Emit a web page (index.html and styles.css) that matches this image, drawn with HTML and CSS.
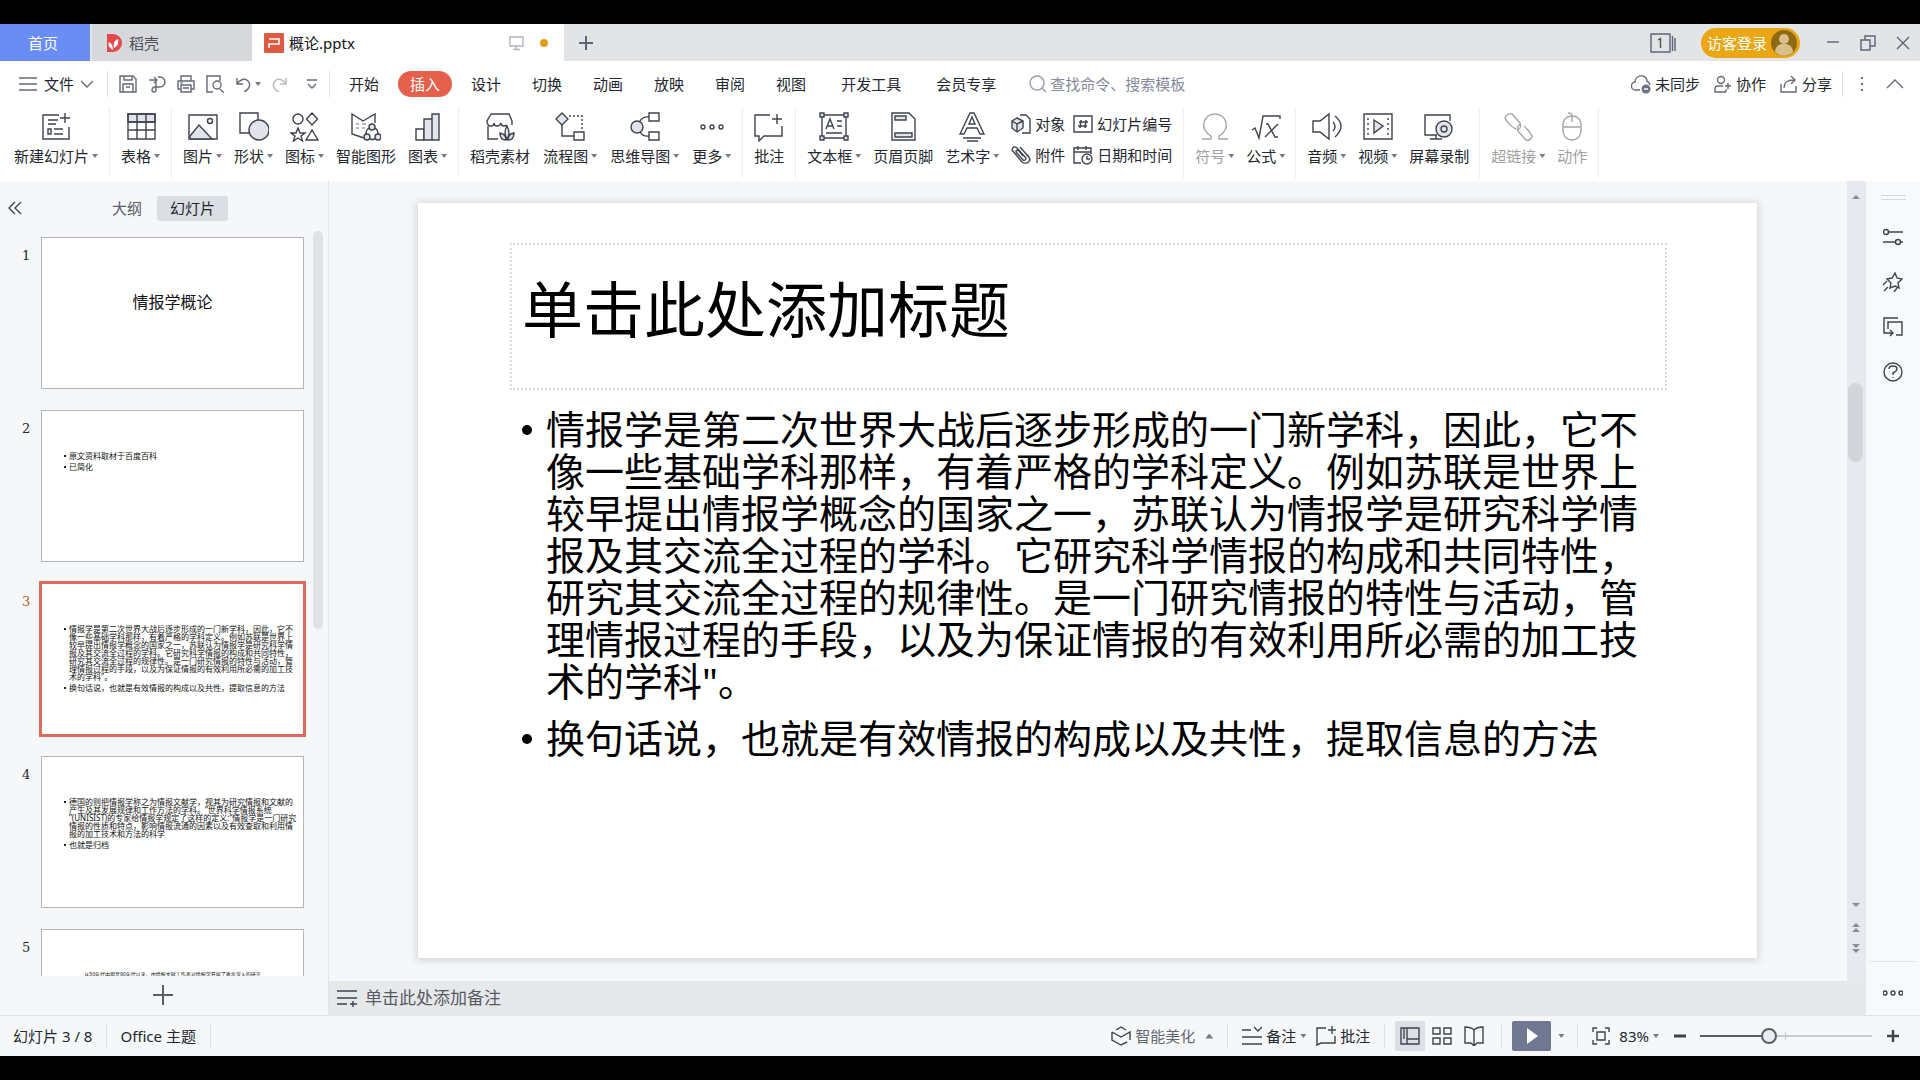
FILE: index.html
```html
<!DOCTYPE html>
<html lang="zh-CN">
<head>
<meta charset="utf-8">
<meta name="viewport" content="width=device-width, initial-scale=1">
<title>概论.pptx</title>
<link rel="stylesheet" href="styles.css">
</head>
<body>
<div class="app">
  <header class="titlebar">
    <button class="home-tab">首页</button>
    <button class="doc-tab">
      <svg class="i20 plain" viewBox="0 0 20 20"><path d="M3 1h6a9 9 0 0 1 0 18H3z" fill="#e5484b"/><path d="M9 17C4 14 4 11 5 9c3 2 4 4 4 8zM10 15c-1-5 1-8 4-9 1 4 0 7-4 9z" fill="#fff"/></svg>
      稻壳
    </button>
    <div class="doc-tab doc-tab-active">
      <svg class="i20 plain" viewBox="0 0 20 20"><rect width="20" height="20" rx="1" fill="#dd5b43"/><path d="M5 15V11h10V6H5" fill="none" stroke="#fff" stroke-width="1.6"/></svg>
      <span class="doc-name">概论.pptx</span>
      <svg class="i16 soft" viewBox="0 0 16 16"><path d="M2 2h13v9H2zM8 11v3M5 14.500h7"/></svg>
      <span class="unsaved"></span>
    </div>
    <button class="new-tab" aria-label="新建"><svg class="i16 heavy" viewBox="0 0 16 16"><path d="M8 1v14M1 8h14"/></svg></button>
    <div class="window-tools">
      <button aria-label="窗口"><svg class="i26" viewBox="0 0 26 20"><path d="M1 1h19v18H1zM22.500 3v15M25 5v13"/><path d="M8 7l2.500-1.500V15" stroke="#3f5a45"/></svg></button>
      <span class="vsep"></span>
      <button class="login">访客登录<svg class="i26" viewBox="0 0 26 26"><circle cx="13" cy="13" r="13" fill="#8f6a14"/><circle cx="13" cy="9" r="5" fill="#d9c08a"/><path d="M4 22c0-11 18-11 18 0-5 5-13 5-18 0z" fill="#d9c08a"/></svg></button>
      <span class="vsep"></span>
      <button aria-label="最小化"><svg class="i16" viewBox="0 0 16 16"><path d="M2 7h12"/></svg></button>
      <button aria-label="还原"><svg class="i16" viewBox="0 0 16 16"><path d="M1 5h9v10H1zM5 5V1h10v10h-5"/></svg></button>
      <button aria-label="关闭"><svg class="i16" viewBox="0 0 16 16"><path d="M2 2l12 12M14 2L2 14"/></svg></button>
    </div>
  </header>

  <nav class="menubar">
    <button class="file-menu">
      <svg class="i18" viewBox="0 0 18 18"><path d="M0 3h18M0 9h18M0 15h18"/></svg>
      文件
      <svg class="i12" viewBox="0 0 12 12"><path d="M0 3l6 6 6-6"/></svg>
    </button>
    <span class="vsep"></span>
    <div class="quick">
      <button aria-label="保存"><svg class="i18" viewBox="0 0 18 18"><path d="M1 1h13l3 3v13H1zM4 17V9h10v8M5 1v4h8V1M7 12h4"/></svg></button>
      <button aria-label="输出"><svg class="i18" viewBox="0 0 18 18"><path d="M1 5h8M6 2l3 3-3 3M10 2h2a5 5 0 0 1 0 10H8M8 7v8q0 2-2 2t-2-2 2-3h3"/></svg></button>
      <button aria-label="打印"><svg class="i18" viewBox="0 0 18 18"><path d="M4 6V1h10v5M4 14H1V6h16v8h-3M4 10h10v7H4zM3.500 8h2M6 13h6"/></svg></button>
      <button aria-label="打印预览"><svg class="i18" viewBox="0 0 18 18"><path d="M7 17H1V1h13v5M14 14l4 4"/><circle cx="11" cy="10" r="4"/></svg></button>
      <button class="undo" aria-label="撤销"><svg class="i16" viewBox="0 0 16 16"><path d="M2 2v6h6M2 8c3-5 8-6 11-3s2 8-4 11"/></svg><i class="caret"></i></button>
      <button class="redo" aria-label="恢复"><svg class="i16" viewBox="0 0 16 16"><path d="M14 2v6H8M14 8C11 3 6 2 3 5s-2 8 4 11"/></svg></button>
      <button aria-label="自定义"><svg class="i12" viewBox="0 0 12 12"><path d="M1 2h10M2 6l4 4 4-4"/></svg></button>
    </div>
    <span class="vsep"></span>
    <div class="tabs">
      <button>开始</button>
      <button class="tab-active">插入</button>
      <button>设计</button>
      <button>切换</button>
      <button>动画</button>
      <button>放映</button>
      <button>审阅</button>
      <button>视图</button>
      <button class="tab-wide">开发工具</button>
      <button class="tab-wide">会员专享</button>
    </div>
    <label class="search">
      <svg class="i18" viewBox="0 0 18 18"><circle cx="8" cy="8" r="7"/><path d="M13 13l4 4"/></svg>
      <input type="text" placeholder="查找命令、搜索模板" aria-label="查找命令、搜索模板">
    </label>
    <div class="share">
      <button><svg class="i20" viewBox="0 0 20 20"><path d="M9 16H5a4 4 0 0 1-1-8c0-8 12-8 12-1q2 1 3 4"/><circle cx="15" cy="15" r="4.500" fill="#6b7285" stroke="none"/><path d="M13 15h4" stroke="#fff"/></svg>未同步</button>
      <button><svg class="i18" viewBox="0 0 18 18"><circle cx="7" cy="5" r="3.500"/><path d="M12 17H1v-3q0-3 3-3h5M12 17v-3M11 11h6M14 8v6"/></svg>协作</button>
      <button><svg class="i18" viewBox="0 0 18 18"><path d="M1 9v8h15v-6M4 13c0-6 3-8 10-8M11 1l4 4-4 4"/></svg>分享</button>
      <span class="vsep"></span>
      <button class="dots" aria-label="更多选项"><svg class="i18" viewBox="0 0 18 18"><path d="M9 2v2M9 8v2M9 14v2" stroke-width="2"/></svg></button>
      <button aria-label="收起功能区"><svg class="i18" viewBox="0 0 18 18"><path d="M1 13l8-8 8 8"/></svg></button>
    </div>
  </nav>

  <section class="ribbon" aria-label="插入">
    <div class="group">
      <button class="tool"><svg class="i30" viewBox="0 0 30 30"><path d="M18 3H2v24h26V15M7 17h3v5H7zM13 17h9M13 22h9M7 8h10M7 12h8M24 1v10M19 6h10"/></svg><span>新建幻灯片<i class="caret"></i></span></button>
    </div>
    <div class="group">
      <button class="tool"><svg class="i30" viewBox="0 0 30 30"><path class="tint" d="M2 2h27v8H2z"/><path d="M2 2h27v25H2zM2 10h27M2 18h27M11 2v25M20 2v25"/></svg><span>表格<i class="caret"></i></span></button>
    </div>
    <div class="group">
      <button class="tool"><svg class="i30" viewBox="0 0 30 30"><path d="M1 3h28v24H1z"/><path class="tint" d="M2 24l9-11 13 14H2z"/><circle cx="22" cy="9" r="2.500"/></svg><span>图片<i class="caret"></i></span></button>
      <button class="tool"><svg class="i30" viewBox="0 0 30 30"><path d="M10 21H1V1h18v7"/><circle class="tint" cx="20" cy="18" r="10"/></svg><span>形状<i class="caret"></i></span></button>
      <button class="tool"><svg class="i30" viewBox="0 0 30 30"><circle cx="8" cy="7" r="5"/><path d="M22 1l5.500 6L22 13l-5.500-6zM8 16l2 5h5l-4 3 1.500 5L8 26l-4.500 3L5 24l-4-3h5zM22 18l6 10H16z"/></svg><span>图标<i class="caret"></i></span></button>
      <button class="tool"><svg class="i30" viewBox="0 0 30 30"><path d="M13 26L1 22V2l11 7 12-7v9"/><path d="M5 12h3M5 16h3M11 12h4M11 16h3" stroke="#a0a4ae"/><circle class="tint" cx="21" cy="15" r="3"/><circle class="tint" cx="16" cy="25" r="3"/><circle class="tint" cx="27" cy="25" r="3"/><path d="M18 16q-3 2-3 6M24 16q3 2 3 6M19 27q2 1 5 0"/></svg><span>智能图形</span></button>
      <button class="tool"><svg class="i30" viewBox="0 0 30 30"><path d="M3 17h8v11H3z"/><path class="tint" d="M11 7h8v21h-8zM19 2h7v26h-7z"/></svg><span>图表<i class="caret"></i></span></button>
    </div>
    <div class="group group-loose">
      <button class="tool"><svg class="i30" viewBox="0 0 30 30"><path d="M13 27H3V14M6 2h18l3 7v4M6 2L2 9q0 5 4 5 3 0 3-3 0 3 3 3t4-3q0 3 3 3 2 0 3-1"/><path class="tint" d="M22 27q-4-6 0-13 4 7 0 13zM21 28q-6 0-6-7 6 1 6 7zM23 28q6 0 6-7-6 1-6 7z"/></svg><span>稻壳素材</span></button>
      <button class="tool"><svg class="i30" viewBox="0 0 30 30"><path class="tint" d="M7 1l6 6-6 6-6-6z"/><path d="M7 13v11h12M19 20h10v8H19z"/><path d="M14 4h13v15" stroke-dasharray="2 2"/></svg><span>流程图<i class="caret"></i></span></button>
      <button class="tool"><svg class="i30" viewBox="0 0 30 30"><circle class="tint" cx="7" cy="15" r="6"/><path d="M10 9q3-5 9-4M10 20q3 5 9 4M19 1h10v8H19zM19 20h10v8H19z"/></svg><span>思维导图<i class="caret"></i></span></button>
      <button class="tool"><svg class="i30" viewBox="0 0 30 30"><circle cx="6" cy="15" r="2"/><circle cx="15" cy="15" r="2"/><circle cx="24" cy="15" r="2"/></svg><span>更多<i class="caret"></i></span></button>
    </div>
    <div class="group">
      <button class="tool"><svg class="i30" viewBox="0 0 30 30"><path d="M16 3H1v21h4v5l5-5h18V14M23 2v10M18 7h10"/></svg><span>批注</span></button>
    </div>
    <div class="group">
      <button class="tool"><svg class="i30" viewBox="0 0 30 30"><path d="M3 3h24v23H3zM7 17l4-10 4 10M8 14h6M18 9h5M18 14h5M7 21h16"/><path class="tint" d="M1 1h4v4H1zM25 1h4v4h-4zM1 24h4v4H1zM25 24h4v4h-4z"/></svg><span>文本框<i class="caret"></i></span></button>
      <button class="tool"><svg class="i30" viewBox="0 0 30 30"><path d="M4 1h17l6 6v21H4z"/><path class="tint" d="M7 4h11v4H7zM7 21h17v4H7z"/></svg><span>页眉页脚</span></button>
      <button class="tool"><svg class="i30" viewBox="0 0 30 30"><path d="M3 22L13 1h4l10 21h-4l-3-6H10l-3 6zM12 12h6l-3-7zM6 26h18M10 29h11"/></svg><span>艺术字<i class="caret"></i></span></button>
      <div class="mini-grid">
        <button><svg class="i20" viewBox="0 0 20 20"><path d="M9 1h6l4 4v14h-8"/><path class="tint" d="M6 4l6 3v7l-6 4-5-4V7z"/><path d="M1 7l5 3 6-3M6 10v8"/></svg>对象</button>
        <button><svg class="i20" viewBox="0 0 20 20"><path d="M1 2h18v16H1z"/><path d="M8 6l-1 8M13 6l-1 8M6 8h9M5 12h9" stroke-width="1.500"/></svg>幻灯片编号</button>
        <button><svg class="i20" viewBox="0 0 20 20"><path d="M5 7l7 8q3 1 3-2L6 3Q2 0 1 5l10 12q5 3 8-2-1-4-3-5L9 2M5 7q0-3 3-1l4 5"/></svg>附件</button>
        <button><svg class="i20" viewBox="0 0 20 20"><path d="M8 18H1V3h17v6M1 7h17M5 1v4M13 1v4"/><circle cx="14" cy="14" r="5"/><path d="M14 11v3h3"/></svg>日期和时间</button>
      </div>
    </div>
    <div class="group group-tight">
      <button class="tool tool-off"><svg class="i30" viewBox="0 0 30 30"><path d="M2 27h9v-3C-1 17 3 2 15 2s16 15 4 22v3h9"/></svg><span>符号<i class="caret"></i></span></button>
      <button class="tool"><svg class="i30" viewBox="0 0 30 30"><path d="M1 18l3-2 4 10L12 4h17v3M15 12h2l7 13h3M27 12L14 25"/></svg><span>公式<i class="caret"></i></span></button>
    </div>
    <div class="group group-tight">
      <button class="tool"><svg class="i30" viewBox="0 0 30 30"><path d="M1 9h7l9-7v25l-9-7H1zM21 10q4 5 0 9M23 4q12 10 0 21"/></svg><span>音频<i class="caret"></i></span></button>
      <button class="tool"><svg class="i30" viewBox="0 0 30 30"><path d="M1 2h28v25H1z"/><path class="tint" d="M11 8l9 6-9 7z"/><path d="M5 6v17M25 6v17" stroke-dasharray="2 3"/></svg><span>视频<i class="caret"></i></span></button>
      <button class="tool"><svg class="i30" viewBox="0 0 30 30"><path d="M13 23H1V3h25v6M6 27h12M12 23v4"/><circle class="tint" cx="20" cy="17" r="8"/><circle cx="20" cy="17" r="3"/></svg><span>屏幕录制</span></button>
    </div>
    <div class="group">
      <button class="tool tool-off"><svg class="i30" viewBox="0 0 30 30"><path d="M13 17C8 15 3 9 2 6q2-5 7-4l8 9q2 4-2 7M17 12q-4 3-2 7l8 9q5 1 6-4-3-6-8-10"/></svg><span>超链接<i class="caret"></i></span></button>
      <button class="tool tool-off"><svg class="i30" viewBox="0 0 30 30"><path d="M6 15v-3q1-8 9-8t9 8v7q-1 9-9 9t-9-9zM6 15h18M15 10V4q0-3-4-3"/></svg><span>动作</span></button>
    </div>
  </section>

  <main class="work">
    <aside class="outline">
      <div class="outline-head">
        <button class="fold" aria-label="收起"><svg class="i14" viewBox="0 0 14 14"><path d="M7 1L1 7l6 6M13 1L7 7l6 6"/></svg></button>
        <button class="view">大纲</button>
        <button class="view view-active">幻灯片</button>
      </div>
      <div class="list-wrap">
        <ol class="thumbs">
          <li><span class="num">1</span><div class="thumb"><p class="thumb-title">情报学概论</p></div></li>
          <li><span class="num">2</span><div class="thumb"><ul class="thumb-text"><li>原文资料取材于百度百科</li><li>已简化</li></ul></div></li>
          <li class="current"><span class="num">3</span><div class="thumb"><ul class="thumb-text"><li>情报学是第二次世界大战后逐步形成的一门新学科，因此，它不<br>像一些基础学科那样，有着严格的学科定义。例如苏联是世界上<br>较早提出情报学概念的国家之一，苏联认为情报学是研究科学情<br>报及其交流全过程的学科。它研究科学情报的构成和共同特性，<br>研究其交流全过程的规律性。是一门研究情报的特性与活动，管<br>理情报过程的手段，以及为保证情报的有效利用所必需的加工技<br>术的学科"。</li><li>换句话说，也就是有效情报的构成以及共性，提取信息的方法</li></ul></div></li>
          <li><span class="num">4</span><div class="thumb"><ul class="thumb-text"><li>德国的则把情报学称之为情报文献学，视其为研究情报和文献的<br>产生及其发展规律和工作方法的学科。“世界科学情报系统<br>”(UNISIST)的专家给情报学规定了这样的定义:“情报学是一门研究<br>情报的性质和特点，影响情报流通的因素以及有效查取和利用情<br>报的加工技术和方法的科学</li><li>也就是归档</li></ul></div></li>
          <li><span class="num">5</span><div class="thumb"><p class="thumb-small">从50年代中期至90年代以来，由情报文献工作者对情报学开展了逐步深入的研究</p></div></li>
        </ol>
        <div class="list-bar"></div>
      </div>
      <button class="add-slide" aria-label="新建幻灯片"><svg class="i20" viewBox="0 0 20 20"><path d="M10 0v20M0 10h20"/></svg></button>
    </aside>

    <section class="editor">
      <div class="canvas-row">
        <div class="canvas">
          <article class="slide">
            <h1 class="slide-title">单击此处添加标题</h1>
            <ul class="slide-body">
              <li>情报学是第二次世界大战后逐步形成的一门新学科，因此，它不像一些基础学科那样，有着严格的学科定义。例如苏联是世界上较早提出情报学概念的国家之一，苏联认为情报学是研究科学情报及其交流全过程的学科。它研究科学情报的构成和共同特性，研究其交流全过程的规律性。是一门研究情报的特性与活动，管理情报过程的手段，以及为保证情报的有效利用所必需的加工技术的学科"。</li>
              <li>换句话说，也就是有效情报的构成以及共性，提取信息的方法</li>
            </ul>
            <svg class="pointer" viewBox="0 0 8 18"><path d="M1 1h2l1 1 1-1h2M4 2v14M1 17h2l1-1 1 1h2"/></svg>
          </article>
        </div>
        <div class="scroll">
          <svg class="i10" viewBox="0 0 10 10"><path d="M1 7l4-4 4 4z"/></svg>
          <div class="scroll-thumb"></div>
          <div class="scroll-end">
            <svg class="i10" viewBox="0 0 10 10"><path d="M1 3l4 4 4-4z"/></svg>
            <svg class="i10" viewBox="0 0 10 10"><path d="M1 5l4-4 4 4zM1 10l4-4 4 4z"/></svg>
            <svg class="i10" viewBox="0 0 10 10"><path d="M1 0l4 4 4-4zM1 5l4 4 4-4z"/></svg>
          </div>
        </div>
      </div>
      <label class="notes">
        <svg class="i20" viewBox="0 0 20 20"><path d="M0 3h20M0 10h20M0 16h10M13 16h7M16 13v6"/></svg>
        <input type="text" placeholder="单击此处添加备注" aria-label="备注">
      </label>
    </section>

    <aside class="side">
      <span class="grip"></span>
      <button aria-label="对象属性"><svg class="i20" viewBox="0 0 20 20"><circle cx="3" cy="5" r="2.500"/><path d="M6 5h14M0 15h12M18 15h2"/><circle cx="15" cy="15" r="2.500"/></svg></button>
      <button aria-label="动画"><svg class="i20" viewBox="0 0 20 20"><path d="M12 1l2 5 5 1-4 4 1 5-4-2-5 2 1-5-4-4 5-1zM4 9l-4 4M5 15l-4 4M14 16l-3 4"/></svg></button>
      <button aria-label="切换"><svg class="i20" viewBox="0 0 20 20"><path d="M15 1H1v15h9M7 13l3 3-3 3M5 12V5h14v13h-6"/></svg></button>
      <button aria-label="帮助"><svg class="i20" viewBox="0 0 20 20"><circle cx="10" cy="10" r="9"/><path d="M6 7q0-3 4-3t4 3q0 2-4 4v2M10 15v1"/></svg></button>
      <button class="side-more" aria-label="更多"><svg class="i20" viewBox="0 0 20 20"><circle cx="2" cy="10" r="2"/><circle cx="10" cy="10" r="2"/><circle cx="18" cy="10" r="2"/></svg></button>
    </aside>
  </main>

  <footer class="status">
    <span class="status-item">幻灯片 3 / 8</span>
    <span class="vsep"></span>
    <span class="status-item">Office 主题</span>
    <span class="vsep"></span>
    <div class="status-right">
      <button class="beautify"><svg class="i20" viewBox="0 0 20 20"><path d="M5 4l5-3 5 3M1 6l9 5 9-5v8M1 6v8l9 5 6-3"/></svg>智能美化<i class="caret caret-up"></i></button>
      <span class="vsep"></span>
      <button><svg class="i20" viewBox="0 0 20 20"><path d="M0 4h9M0 11h20M0 18h20M12 1l4 4 4-4"/></svg>备注<i class="caret"></i></button>
      <button class="comment"><svg class="i20" viewBox="0 0 20 20"><path d="M10 2H1v17l4-2h14v-7M16 0v8M12 4h8"/></svg>批注</button>
      <span class="vsep"></span>
      <div class="views">
        <button class="view-on" aria-label="普通视图"><svg class="i20" viewBox="0 0 20 20"><path d="M1 2h18v16H1zM7 2v16M7 13h12M4 2v11"/></svg></button>
        <button aria-label="浏览视图"><svg class="i20" viewBox="0 0 20 20"><path d="M1 2h7v6H1zM12 2h7v6h-7zM1 12h7v6H1zM12 12h7v6h-7z"/></svg></button>
        <button aria-label="阅读视图"><svg class="i20" viewBox="0 0 20 20"><path d="M10 4Q7 1 1 1v16h6l3 3 3-3h6V1q-6 0-9 3v15"/></svg></button>
      </div>
      <span class="vsep"></span>
      <button class="play" aria-label="放映"><svg class="i16" viewBox="0 0 16 16"><path d="M3 0l11 8-11 8z"/></svg></button>
      <i class="caret"></i>
      <span class="vsep"></span>
      <button aria-label="最佳显示比例"><svg class="i18" viewBox="0 0 18 18"><path d="M1 5V1h4M13 1h4v4M17 13v4h-4M5 17H1v-4M5 5h8v8H5z"/></svg></button>
      <button class="percent">83%<i class="caret"></i></button>
      <button aria-label="缩小"><svg class="i12" viewBox="0 0 12 12"><path d="M0 6h12" stroke-width="3"/></svg></button>
      <input class="zoom" type="range" min="0" max="100" value="39" aria-label="缩放">
      <button aria-label="放大"><svg class="i12" viewBox="0 0 12 12"><path d="M0 6h12M6 0v12" stroke-width="2.500"/></svg></button>
    </div>
  </footer>
</div>
</body>
</html>
```

FILE: styles.css
```css
* {
  box-sizing: border-box;
}

body {
  margin: 0;
  background: #000;
  font-family: "Noto Sans", "Noto Sans CJK SC", sans-serif;
  font-size: 15px;
  line-height: 20px;
  color: #24272e;
  text-spacing-trim: space-all;
}

button,
input {
  font: inherit;
  color: inherit;
  border: 0;
  padding: 0;
  margin: 0;
  background: none;
}

button {
  display: flex;
  align-items: center;
  white-space: nowrap;
}

svg {
  display: block;
  flex: none;
  fill: none;
  stroke: #3f434d;
  stroke-width: 1.4;
}

ul,
ol,
p,
h1 {
  margin: 0;
  padding: 0;
  list-style: none;
  font-weight: 400;
}

.i10 { width: 10px; height: 10px; }
.i12 { width: 12px; height: 12px; }
.i14 { width: 14px; height: 14px; }
.i16 { width: 16px; height: 16px; }
.i18 { width: 18px; height: 18px; }
.i20 { width: 20px; height: 20px; }
.i26 { width: 26px; height: 26px; }
.i30 { width: 30px; height: 30px; }

.plain { stroke: none; }
.soft { stroke: #b4b7c0; }

.heavy {
  stroke: #5c6478;
  stroke-width: 2;
}

.vsep {
  flex: none;
  width: 1px;
  height: 26px;
  background: #dfe0e4;
}

.caret {
  flex: none;
  display: inline-block;
  width: 6px;
  height: 4px;
  background: #777b88;
  clip-path: polygon(0 0, 100% 0, 50% 100%);
}

.caret-up {
  width: 8px;
  height: 5px;
  clip-path: polygon(0 100%, 100% 100%, 50% 0);
}

.app {
  display: flex;
  flex-direction: column;
  height: calc(100vh - 48px);
  margin: 24px 0;
  background: #fff;
  overflow: hidden;
}

/* title bar */

.titlebar {
  display: flex;
  flex: none;
  height: 37px;
  background: #e3e4e6;
}

.home-tab {
  justify-content: center;
  width: 90px;
  padding-right: 4px;
  background: #698cf5;
  color: #fff;
}

.doc-tab {
  gap: 5px;
  width: 160px;
  margin-left: 2px;
  padding-left: 12px;
  background: #d7d8dc;
  color: #4b4f5a;
}

.doc-tab-active {
  display: flex;
  align-items: center;
  width: 312px;
  margin-left: 0;
  padding: 0 16px 0 12px;
  background: #fff;
  color: #111;
}

.doc-name {
  flex: 1;
}

.unsaved {
  width: 8px;
  height: 8px;
  margin-left: 11px;
  border-radius: 50%;
  background: #d8a012;
}

.new-tab {
  padding: 0 14px;
}

.window-tools {
  display: flex;
  align-items: center;
  gap: 10px;
  margin-left: auto;
  padding-right: 9px;
}

.window-tools svg {
  stroke: #5c6478;
}

.window-tools button + button {
  margin-left: 9px;
}

.window-tools .vsep + button {
  margin-left: 4px;
}

.window-tools .login {
  gap: 4px;
  height: 30px;
  margin-left: 0;
  padding: 0 3px 0 6px;
  border-radius: 15px;
  background: #eaa613;
  color: #fff;
}

.window-tools .login svg {
  stroke: none;
}

/* menu bar */

.menubar {
  display: flex;
  align-items: center;
  flex: none;
  height: 46px;
}

.menubar svg {
  stroke: #666a75;
}

.file-menu {
  gap: 7px;
  width: 107px;
  padding-left: 19px;
}

.quick {
  display: flex;
  align-items: center;
  gap: 11px;
  width: 221px;
  padding-left: 11px;
}

.undo {
  gap: 4px;
}

.redo svg {
  opacity: 0.45;
}

.quick button:last-child {
  margin-left: 7px;
}

.tabs {
  display: flex;
  gap: 7px;
  padding-left: 7px;
}

.tabs button {
  height: 26px;
  padding: 0 12px;
  border-radius: 13px;
}

.tabs .tab-active {
  background: #e4604a;
  color: #fff;
}

.tabs .tab-wide {
  margin-left: 4px;
}

.search {
  display: flex;
  align-items: center;
  flex: 1;
  gap: 3px;
  margin-left: 21px;
}

.search svg {
  stroke: #9a9eac;
}

.search input {
  width: 150px;
}

.search input::placeholder {
  color: #858a9a;
  opacity: 1;
}

.share {
  display: flex;
  align-items: center;
  gap: 14px;
  padding-right: 16px;
}

.share button {
  gap: 4px;
}

.share .vsep {
  margin-left: -4px;
}

.share .dots {
  margin: 0 1px 0 -4px;
}

/* ribbon */

.ribbon {
  display: flex;
  flex: none;
  height: 74px;
  padding-left: 3px;
}

.group {
  display: flex;
  gap: 12px;
  height: 71px;
  padding: 0 11px;
  border-right: 1px solid #ededf0;
}

.group-loose {
  gap: 13px;
}

.group-tight {
  padding: 0 10px 0 11px;
}

.tool {
  flex-direction: column;
  gap: 4px;
  padding-top: 5px;
}

.tool span {
  display: flex;
  align-items: center;
  gap: 3px;
}

.tint {
  fill: #e1e4ea;
}

.tool-off {
  color: #a0a0a2;
}

.tool-off svg {
  stroke: #a6a6a8;
}

.mini-grid {
  display: grid;
  grid-template-columns: auto auto;
  grid-template-rows: 20px 20px;
  gap: 11px 8px;
  padding-top: 7px;
}

.mini-grid button {
  gap: 4px;
}

/* workspace */

.work {
  display: flex;
  flex: 1;
  min-height: 0;
  background: #f5f7f9;
}

.outline {
  display: flex;
  flex-direction: column;
  flex: none;
  width: 329px;
  border-right: 1px solid #e2e4e8;
}

.outline-head {
  display: flex;
  align-items: center;
  flex: none;
  height: 50px;
  padding: 4px 0 0 8px;
}

.fold {
  margin-right: 77px;
}

.view {
  height: 25px;
  padding: 0 13px;
  border-radius: 3px;
  color: #5a5e68;
}

.view-active {
  margin-left: 2px;
  background: #dbdfe4;
  color: #24272e;
}

.list-wrap {
  display: flex;
  flex: 1;
  min-height: 0;
}

.thumbs {
  display: flex;
  flex-direction: column;
  flex: 1;
  gap: 21px;
  padding-top: 6px;
  overflow: hidden;
}

.thumbs > li {
  display: flex;
  flex: none;
}

.num {
  width: 41px;
  padding: 9px 0 0 22px;
  font-family: "DejaVu Serif", serif;
  font-size: 13px;
}

.thumb {
  width: 263px;
  height: 152px;
  border: 1px solid #b2b5ba;
  background: #fff;
  color: #111;
  white-space: nowrap;
}

.current .num {
  color: #b5622c;
}

.current .thumb {
  border-color: #dd6b5d;
  outline: 2px solid #dd6b5d;
}

.thumb-title {
  padding-top: 54px;
  font-size: 16px;
  text-align: center;
}

.thumb-text {
  padding: 41px 0 0 27px;
  font-size: 8px;
  line-height: 8px;
}

.thumb-text li {
  margin-bottom: 3px;
}

.thumb-text li::before {
  content: "";
  float: left;
  width: 2px;
  height: 2px;
  margin: 3px 0 0 -5px;
  background: #222;
}

.thumb-small {
  padding-top: 40px;
  font-size: 5px;
  line-height: 8px;
  text-align: center;
}

.list-bar {
  width: 10px;
  height: 398px;
  margin-right: 5px;
  border-radius: 5px;
  background: #e1e2e5;
}

.add-slide {
  justify-content: center;
  flex: none;
  height: 39px;
  padding: 0 2px 2px 0;
}

.add-slide svg {
  stroke: #5a5e70;
  stroke-width: 2;
}

.editor {
  display: flex;
  flex-direction: column;
  flex: 1;
  min-width: 0;
}

.canvas-row {
  display: flex;
  flex: 1;
  min-height: 0;
}

.canvas {
  flex: 1;
  min-width: 0;
  padding: 22px 90px 0 89px;
  overflow: hidden;
}

.slide {
  position: relative;
  aspect-ratio: 1339 / 755;
  padding: 40px 90px 0 92px;
  background: #fff;
  box-shadow: 0 1px 7px 2px #d6d7d9;
  color: #000;
}

.slide-title {
  height: 147px;
  padding: 20px 10px;
  border: 2px dotted #dcdcdc;
  font-size: 61px;
  line-height: 90px;
}

.slide-body {
  padding: 18px 12px 0 36px;
  font-size: 39px;
  line-height: 42px;
}

.slide-body li {
  margin-bottom: 15px;
}

.slide-body li::before {
  content: "";
  float: left;
  width: 10px;
  height: 10px;
  margin: 17px 0 0 -24px;
  border-radius: 50%;
  background: #000;
}

.pointer {
  position: absolute;
  left: 262px;
  top: 424px;
  width: 8px;
  height: 18px;
  stroke: #555;
  stroke-width: 1;
}

.scroll {
  display: flex;
  flex-direction: column;
  align-items: center;
  width: 18px;
  padding: 11px 2px 27px 1px;
  background: #e8e9ee;
}

.scroll svg {
  fill: #898c9b;
  stroke: none;
}

.scroll-thumb {
  width: 15px;
  height: 79px;
  margin-top: 181px;
  border-radius: 8px;
  background: #d4d5da;
}

.scroll-end {
  display: flex;
  flex-direction: column;
  gap: 12px;
  margin-top: auto;
}

.notes {
  display: flex;
  align-items: center;
  flex: none;
  gap: 8px;
  height: 34px;
  padding-left: 8px;
  background: #e7e8e9;
}

.notes input {
  flex: 1;
  font-size: 17px;
}

.notes input::placeholder {
  color: #565a66;
  opacity: 1;
}

.side {
  display: flex;
  flex-direction: column;
  align-items: center;
  flex: none;
  gap: 25px;
  width: 55px;
  padding-top: 14px;
  border-left: 1px solid #e6e8ec;
  background: #f8f9fb;
}

.grip {
  width: 25px;
  height: 5px;
  margin-bottom: 2px;
  border: solid #d5d7da;
  border-width: 1px 0;
}

.side-more {
  justify-content: center;
  width: 46px;
  height: 54px;
  margin-top: auto;
  padding-top: 8px;
  border-top: 1px solid #e2e4e8;
}

/* status bar */

.status {
  display: flex;
  align-items: center;
  flex: none;
  height: 41px;
  border-top: 1px solid #e2e4e8;
  background: #f5f7f9;
}

.status-item {
  padding: 0 14px 0 13px;
}

.status-right {
  display: flex;
  align-items: center;
  gap: 14px;
  margin-left: auto;
  padding-right: 21px;
}

.status-right button {
  gap: 4px;
}

.status-right .beautify {
  color: #63676f;
}

.beautify .caret {
  margin-left: 6px;
}

.status-right .comment {
  margin-left: -4px;
}

.views {
  display: flex;
  gap: 2px;
  margin: 0 -2px 0 -4px;
}

.views button {
  justify-content: center;
  width: 30px;
  height: 30px;
  border-radius: 2px;
}

.views .view-on {
  background: #dce0e6;
}

.play {
  justify-content: center;
  width: 39px;
  height: 30px;
  margin-left: -4px;
  border-radius: 2px;
  background: #6f7890;
}

.play svg {
  fill: #fff;
  stroke: none;
}

.play + .caret {
  margin: 0 -1px 0 -7px;
}

.percent {
  margin: 0 1px 0 -5px;
}

.zoom {
  -webkit-appearance: none;
  appearance: none;
  width: 172px;
  height: 16px;
  margin-right: 1px;
  background:
    linear-gradient(#c9cbd0, #c9cbd0) 85px 50% / 1px 8px no-repeat,
    linear-gradient(90deg, #5a5e68 39%, #c9cbd0 39%) 0 50% / 100% 2px no-repeat;
}

.zoom::-webkit-slider-thumb {
  -webkit-appearance: none;
  width: 16px;
  height: 16px;
  border: 2px solid #5c606a;
  border-radius: 50%;
  background: #ebecef;
}
```
